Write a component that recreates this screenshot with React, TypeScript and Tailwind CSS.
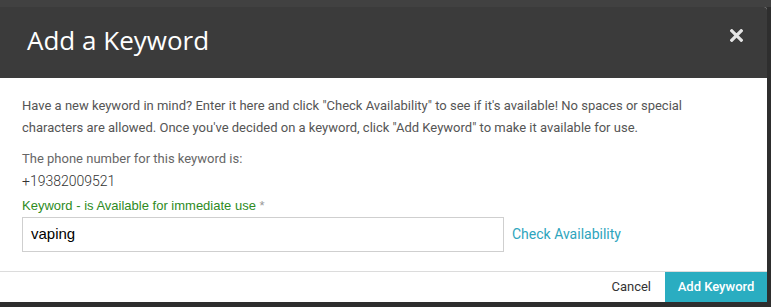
export default function App() {
  return (
    <div className="w-[771px] h-[307px] bg-[#2e2e2e] flex flex-col overflow-hidden">
      <div className="h-[7px] bg-[#414141] shrink-0" />
      <div className="w-[767px] flex flex-col bg-white rounded-tr-[3px] overflow-hidden">
        <div className="h-[71px] bg-[#3b3b3b] flex items-center justify-between pl-[27px] pr-[24px]">
          <h1 className="text-white text-[26px] leading-none font-['Open_Sans',sans-serif] font-normal mt-[-6px]">
            Add a Keyword
          </h1>
          <svg width="13" height="13" viewBox="0 0 13 13" className="mt-[-14px]">
            <path d="M1.8 1.8 L11.2 11.2 M11.2 1.8 L1.8 11.2" stroke="#e4e4e4" strokeWidth="3.2" strokeLinecap="square" />
          </svg>
        </div>
        <div className="px-[22px] pt-[17px] font-['Roboto',sans-serif] text-[13px]">
          <p className="text-[#555] leading-[22px]">
            Have a new keyword in mind? Enter it here and click "Check Availability" to see if it's available! No spaces or special characters are allowed. Once you've decided on a keyword, click "Add Keyword" to make it available for use.
          </p>
          <p className="text-[#666] leading-[22px] mt-[9px]">The phone number for this keyword is:</p>
          <p className="text-[#333] leading-[22px] text-[14px] font-light">+19382009521</p>
          <label className="block mt-[4px] leading-[20px] text-[13px] text-[#2e8b1e] font-['Liberation_Sans',Arial,sans-serif]">
            Keyword - is Available for immediate use <span className="text-[#999]">*</span>
          </label>
          <div className="flex items-center gap-[8px] mt-[1px]">
            <div className="w-[482px] h-[35px] border border-[#cfcfcf] flex items-center px-[8px] text-[15px] text-black font-['Liberation_Sans',Arial,sans-serif]">
              vaping
            </div>
            <span className="text-[14px] text-[#2ea5bd]">Check Availability</span>
          </div>
        </div>
        <div className="mt-[19px] border-t border-[#dcdcdc] flex justify-end items-stretch h-[31px] font-['Roboto',sans-serif] text-[13px]">
          <span className="flex items-center pr-[14px] text-[#333]">Cancel</span>
          <span className="w-[102px] bg-[#2aadc1] text-white flex items-center justify-center font-medium">
            Add Keyword
          </span>
        </div>
      </div>
    </div>
  );
}
